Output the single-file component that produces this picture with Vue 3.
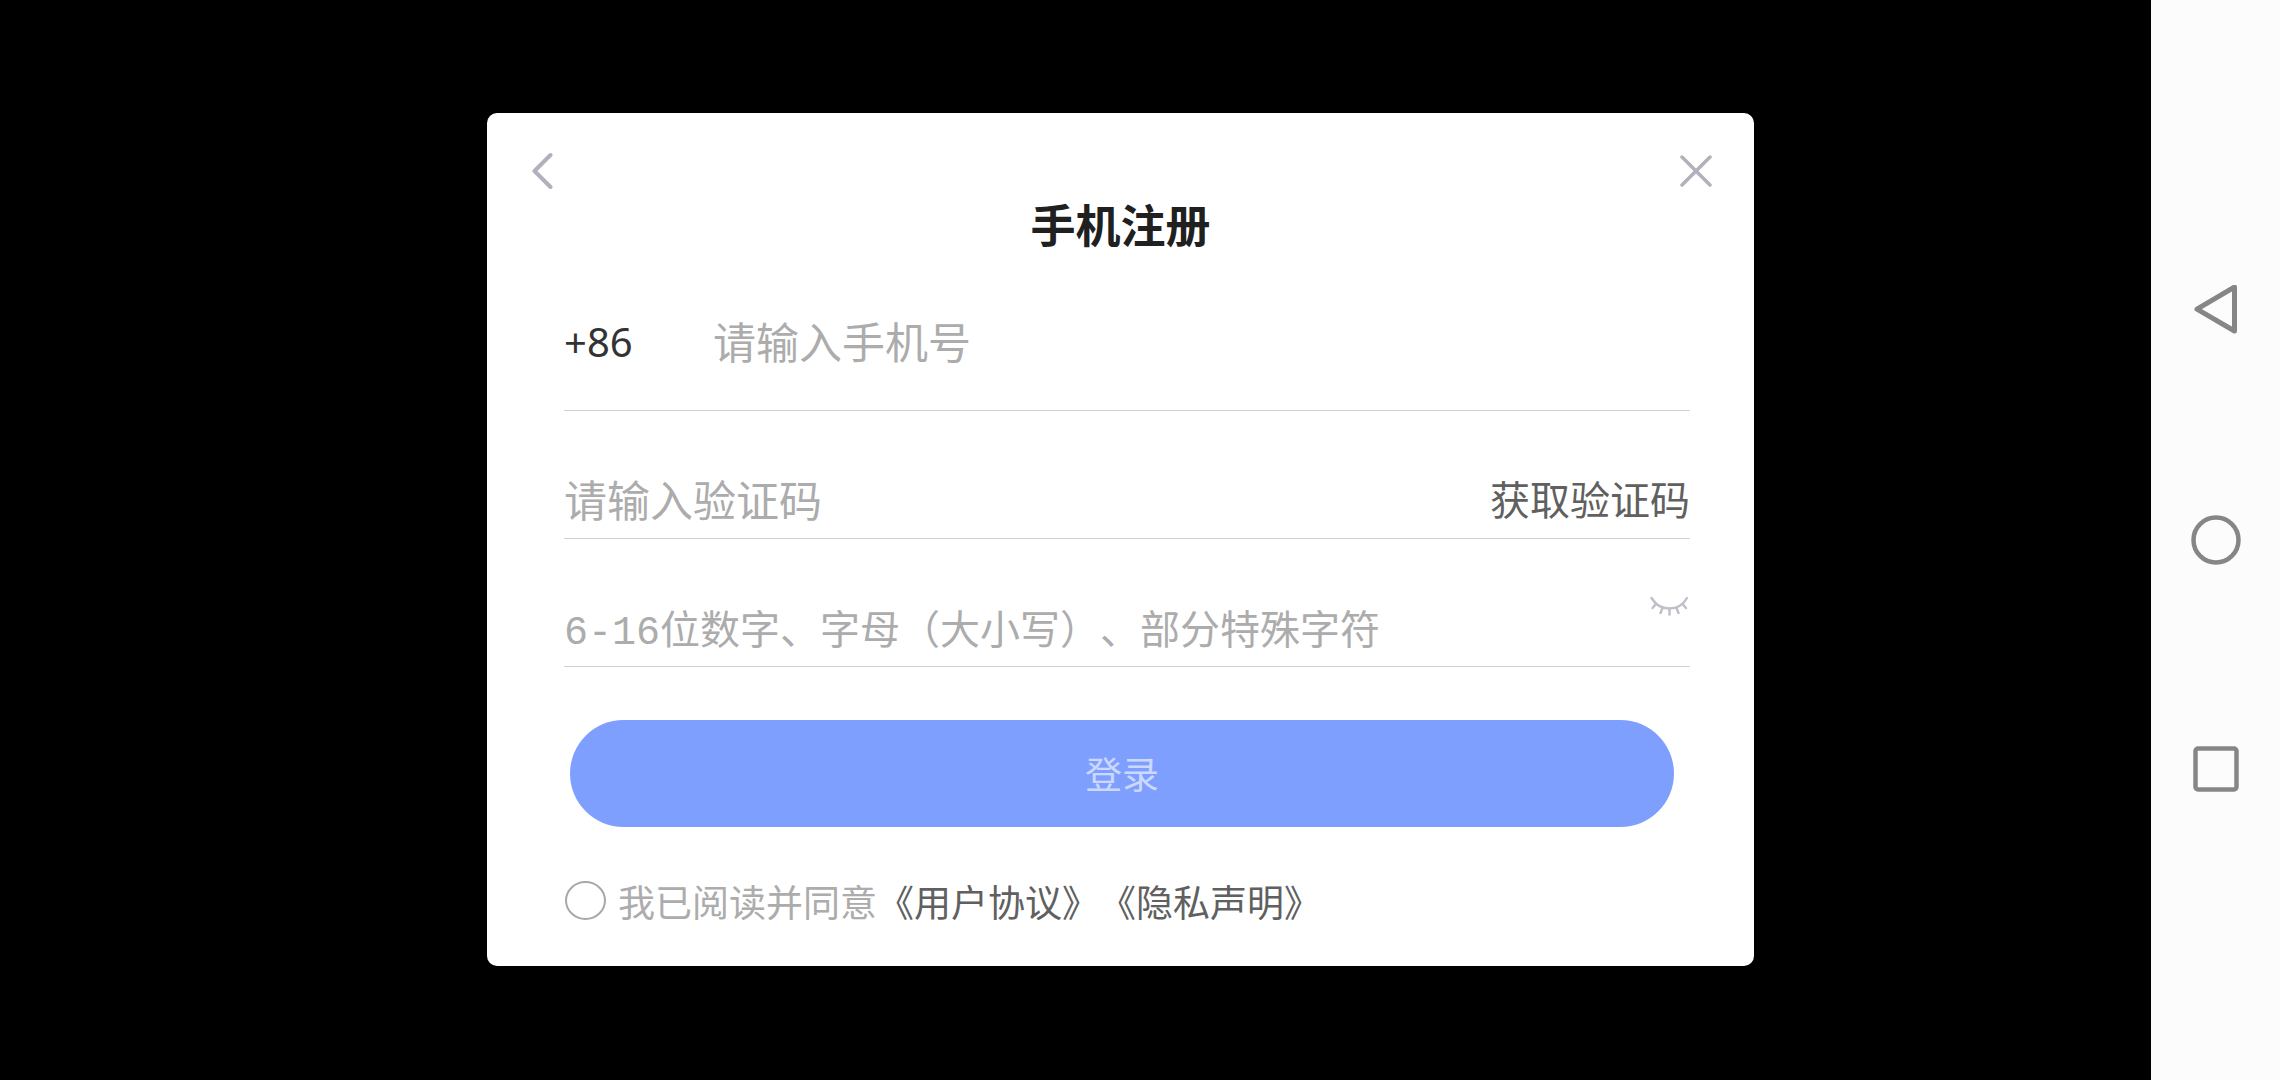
<script setup>
import { ref } from 'vue'

const phone = ref('')
const code = ref('')
const password = ref('')
const showPassword = ref(false)
const agreed = ref(false)
</script>

<template>
  <div class="screen">
    <main class="stage">
      <section class="card" aria-labelledby="dialog-title">
        <header class="bar">
          <button class="icon-btn" type="button" aria-label="返回">
            <svg width="22" height="38" viewBox="0 0 22 38" fill="none" stroke="#b1b1bb" stroke-width="4" stroke-linecap="round" stroke-linejoin="round">
              <path d="M19.5 3 L3.5 19 L19.5 35" />
            </svg>
          </button>
          <button class="icon-btn" type="button" aria-label="关闭">
            <svg width="32" height="32" viewBox="0 0 32 32" fill="none" stroke="#b1b1bb" stroke-width="3.5" stroke-linecap="round">
              <path d="M2 2 L30 30 M30 2 L2 30" />
            </svg>
          </button>
        </header>
        <h1 id="dialog-title" class="title">手机注册</h1>

        <form class="form" @submit.prevent>
          <div class="row row-phone">
            <label class="prefix" for="phone">+86</label>
            <input id="phone" v-model="phone" class="field" type="tel" placeholder="请输入手机号" />
          </div>
          <div class="row">
            <input v-model="code" class="field" type="text" aria-label="验证码" placeholder="请输入验证码" />
            <button class="code-btn" type="button">获取验证码</button>
          </div>
          <div class="row row-password">
            <input
              v-model="password"
              class="field field-password"
              :type="showPassword ? 'text' : 'password'"
              aria-label="密码"
              placeholder="6-16位数字、字母（大小写）、部分特殊字符"
            />
            <button class="icon-btn eye-btn" type="button" aria-label="显示密码" @click="showPassword = !showPassword">
              <svg width="40" height="22" viewBox="0 0 40 22" fill="none" stroke="#c0c0ca" stroke-width="2.5" stroke-linecap="round">
                <path d="M1.5 3 C10 17 29 17 37 3" />
                <path d="M6 9 L2.5 13 M12.5 13 L10.5 18 M19.5 14 V19.5 M26.5 13 L28.5 18 M32.5 9 L36 13" />
              </svg>
            </button>
          </div>

          <button class="submit" type="submit">登录</button>

          <div class="agreement">
            <input id="agree" v-model="agreed" class="check" type="checkbox" />
            <label for="agree">我已阅读并同意</label>
            <a href="#terms">《用户协议》</a>
            <a href="#privacy">《隐私声明》</a>
          </div>
        </form>
      </section>
    </main>

    <nav class="system-nav" aria-label="系统导航">
      <button class="icon-btn" type="button" aria-label="后退">
        <svg width="50" height="50" viewBox="0 0 50 50" fill="none" stroke="#868686" stroke-width="5" stroke-linejoin="round">
          <path d="M6 24.2 L43.5 2 V46 Z" />
        </svg>
      </button>
      <button class="icon-btn" type="button" aria-label="主屏幕">
        <svg width="50" height="50" viewBox="0 0 50 50" fill="none" stroke="#868686" stroke-width="4.5">
          <circle cx="25" cy="25" r="22.5" />
        </svg>
      </button>
      <button class="icon-btn" type="button" aria-label="最近任务">
        <svg width="50" height="50" viewBox="0 0 50 50" fill="none" stroke="#868686" stroke-width="4.5">
          <rect x="4.5" y="3.5" width="41" height="41" rx="2.5" />
        </svg>
      </button>
    </nav>
  </div>
</template>

<style>
body {
  margin: 0;
  background: #000;
}
</style>

<style scoped>
.screen {
  display: flex;
  min-height: 100vh;
  background: #000;
  font-family: "Noto Sans CJK SC", sans-serif;
  text-spacing-trim: space-all;
}

button,
input {
  margin: 0;
  padding: 0;
  border: 0;
  background: none;
  font-family: inherit;
  text-spacing-trim: inherit;
}

button {
  cursor: pointer;
}

.stage {
  flex: 1;
  display: flex;
  align-items: center;
  justify-content: center;
  padding: 0 0 2px 90px;
}

.card {
  box-sizing: border-box;
  width: 100%;
  max-width: 1267px;
  padding: 40px 0 35px;
  border-radius: 10px;
  background: #fff;
}

.bar {
  display: flex;
  align-items: center;
  justify-content: space-between;
  height: 36px;
  padding: 0 42px 0 44px;
}

.icon-btn {
  display: flex;
}

.icon-btn svg {
  display: block;
}

.title {
  margin: 5px 0 3px;
  color: #202020;
  font-size: 45px;
  font-weight: 700;
  line-height: 60px;
  text-align: center;
}

.form {
  padding: 0 64px 0 77px;
}

.row {
  box-sizing: border-box;
  display: flex;
  align-items: flex-end;
  height: 128px;
  padding-bottom: 10px;
  border-bottom: 1px solid #d2d2d2;
}

.row-phone {
  height: 154px;
  padding-bottom: 40px;
}

.row-password {
  padding-bottom: 2px;
}

.prefix {
  width: 149px;
  color: #333;
  font-family: "Noto Sans", sans-serif;
  font-size: 40px;
  line-height: 56px;
}

.field {
  flex: 1;
  min-width: 0;
  height: 60px;
  outline: 0;
  color: #333;
  font-size: 43px;
}

.field::placeholder {
  color: #acacac;
  opacity: 1;
}

.field-password {
  font-family: "Liberation Mono", "Noto Sans CJK SC", monospace;
  font-size: 40px;
}

.code-btn {
  color: #606060;
  font-size: 40px;
  line-height: 60px;
}

.eye-btn {
  margin-bottom: 47px;
}

.submit {
  display: block;
  width: calc(100% - 22px);
  height: 107px;
  margin: 53px 16px 0 6px;
  border-radius: 54px;
  background: #7f9fff;
  color: #cbd8ff;
  font-size: 37px;
}

.agreement {
  display: flex;
  align-items: center;
  margin-top: 44px;
  color: #acacac;
  font-size: 37px;
  line-height: 60px;
}

.check {
  appearance: none;
  box-sizing: border-box;
  width: 41px;
  height: 39px;
  margin: 0 12px 0 1px;
  border: 2px solid #a8a8a8;
  border-radius: 50%;
}

.check:checked {
  background: #7f9fff;
}

.agreement a {
  color: #606060;
  text-decoration: none;
}

.system-nav {
  display: flex;
  flex-direction: column;
  align-items: center;
  justify-content: center;
  gap: 180px;
  width: 129px;
  background: #fcfcfc;
}
</style>
